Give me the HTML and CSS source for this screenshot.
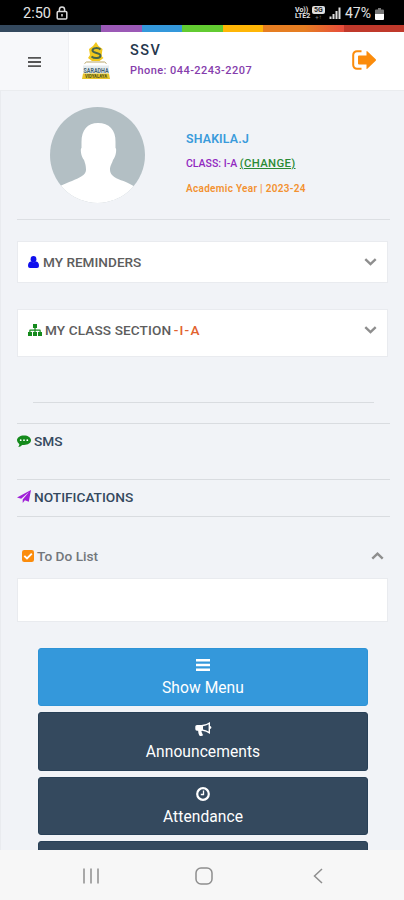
FILE: index.html
```
<!DOCTYPE html>
<html lang="en">
<head>
<meta charset="utf-8">
<meta name="viewport" content="width=device-width">
<title>SSV</title>
<link rel="stylesheet" href="styles.css">
</head>
<body>
<div class="status">
  <span class="time">2:50</span>
  <svg class="lock" width="12" height="14" viewBox="0 0 12 14" fill="none" stroke="#ddd" stroke-width="1.5"><rect x="1.2" y="5.5" width="9.6" height="7.5" rx="1"/><path d="M3.4 5.5V3.6a2.6 2.6 0 0 1 5.2 0v1.9M6 8v2.5"/></svg>
  <span class="volte"><span>Vo))</span><span>LTE2</span></span>
  <span class="net"><span class="net-5g">5G</span><span class="net-arrows">+↑</span></span>
  <svg class="signal" width="12" height="12" viewBox="0 0 12 12" fill="#ddd"><path d="M.5 9.500h2V12h-2zM3.500 7h2v5h-2zM6.500 4h2v8h-2zM9.500.5h2V12h-2z"/></svg>
  <span class="percent">47%</span>
  <svg class="battery" width="9" height="12" viewBox="0 0 9 12"><path fill="#777" d="M3 0h3v1.500h2a1 1 0 0 1 1 1V6H0V2.500a1 1 0 0 1 1-1h2z"/><path fill="#fff" d="M0 6h9v5a1 1 0 0 1-1 1H1a1 1 0 0 1-1-1z"/></svg>
</div>
<div class="stripe"></div>
<header class="header">
  <div class="menu-cell"><svg width="13" height="12" viewBox="0 0 13 12" fill="#555"><path d="M0 1h13v1.800H0zM0 5.100h13v1.800H0zM0 9.200h13V11H0z"/></svg></div>
  <svg class="logo" width="30" height="38" viewBox="0 0 30 38">
    <path fill="#f2c81d" d="M15 0l2.500 4 4 3-1 7 2 2-4 3H11l-4-3 2-3-1-6 4-3z"/>
    <path d="M19.500 7.500c-2-2-8-2-8 1s8 2 8 5-6 3.500-9 1" fill="none" stroke="#49664c" stroke-width="2"/>
    <path d="M3.500 21.500l2-1.500h18l2 1.500" fill="none" stroke="#b9a66a"/>
    <path fill="#e6ecee" d="M2 23.500h26v8H2z"/>
    <text x="2.500" y="30.700" textLength="25" lengthAdjust="spacingAndGlyphs" class="logo-name">SARADHA</text>
    <path fill="#e8c52b" d="M2 31.500h26l1 5.500H1z"/>
    <text x="4" y="36" textLength="22" lengthAdjust="spacingAndGlyphs" class="logo-sub">VIDYALAYA</text>
  </svg>
  <div class="school"><div class="school-name">SSV</div><div class="phone">Phone: 044-2243-2207</div></div>
  <svg class="logout" width="25" height="20" viewBox="0 0 25 20"><path d="M9.500 1.200H5A3.800 3.800 0 0 0 1.200 5v10A3.800 3.800 0 0 0 5 18.800h4.500" fill="none" stroke="#fb8c0c" stroke-width="2"/><path fill="#fb8c0c" d="M7 5.500h7.500V1.500q0-1 .8-.3l8.400 8q.8.800 0 1.600l-8.400 8q-.8.700-.8-.3V14.500H7q-1 0-1-1v-7q0-1 1-1z"/></svg>
</header>
<main class="page">
  <section class="profile">
    <svg class="avatar" width="95" height="96" viewBox="0 0 95 96"><defs><clipPath id="round"><ellipse cx="47.500" cy="48" rx="47.500" ry="48"/></clipPath></defs><g clip-path="url(#round)"><path fill="#b3bfc4" d="M0 0h95v96H0z"/><path fill="#fff" d="M48 16c11 0 18 7 17.500 19v6c1.500 0 .5 9-2.500 12-1 4-3 5-3 10 0 6 7 9 13.500 11 5 2 8 4 12 6L95 96H0L10 79c5-2 8-4 12-5 7-3 14-6 14-11 0-5-1-7-2-10-3-3-4-12-2.500-12v-6c0-12 6-19 16.500-19z"/></g></svg>
    <div class="details">
      <div class="student">SHAKILA.J</div>
      <div class="class-line">CLASS: I-A <a class="change">(CHANGE)</a></div>
      <div class="year">Academic Year | 2023-24</div>
    </div>
  </section>
  <section class="card reminders">
    <svg width="11" height="12" viewBox="0 0 11 12" fill="#1010ee"><ellipse cx="5.500" cy="3.200" rx="2.900" ry="3.200"/><path d="M2.600 5.500Q5.500 7 8.400 5.500 11 6 11 10q0 2-2 2H2q-2 0-2-2 0-4 2.600-4.500z"/></svg>
    <span class="card-title">MY REMINDERS</span>
    <svg class="chev" width="13" height="8" viewBox="0 0 13 8"><path d="M1.300 1.200l5.200 5 5.200-5"/></svg>
  </section>
  <section class="card class-section">
    <svg width="14" height="12" viewBox="0 0 14 12" fill="#148a1c"><path d="M5 0h4v4H7.600v1.500H12q.7 0 .7.700V8H14v4h-4V8h1.500V6.700H7.600V8H9v4H5V8h1.400V6.700H2.500V8H4v4H0V8h1.300V6.200q0-.7.700-.7h4.400V4H5z"/></svg>
    <span class="card-title">MY CLASS SECTION <b class="accent">-I-A</b></span>
    <svg class="chev" width="13" height="8" viewBox="0 0 13 8"><path d="M1.300 1.200l5.200 5 5.200-5"/></svg>
  </section>
  <hr class="short-rule">
  <section class="row sms">
    <svg width="14" height="12" viewBox="0 0 14 12"><path fill="#148a1c" d="M7 .5c4 0 7 2.100 7 4.800S11 10 7 10q-1 0-1.800-.1Q3.500 11.700 1.200 12q1-1 1.200-2.800Q0 7.700 0 5.300C0 2.600 3 .5 7 .5z"/><g fill="#fff"><circle cx="3.700" cy="5.200" r=".9"/><circle cx="7" cy="5.200" r=".9"/><circle cx="10.300" cy="5.200" r=".9"/></g></svg>
    <span>SMS</span>
  </section>
  <section class="row notes">
    <svg width="14" height="13" viewBox="0 0 14 13" fill="#a020d8"><path d="M14 0l-2.200 11.800-3.900-1.500L5.700 13V9.500L12 2 4.200 8.800 0 7.500z"/></svg>
    <span>NOTIFICATIONS</span>
  </section>
  <section class="todo">
    <svg width="12" height="12" viewBox="0 0 12 12"><rect width="12" height="12" rx="2.200" fill="#fb8c0c"/><path d="M2.300 5.800l2.700 2.700 4.800-4.800" fill="none" stroke="#fff" stroke-width="1.900"/></svg>
    <span>To Do List</span>
    <svg class="chev" width="13" height="8" viewBox="0 0 13 8"><path d="M1.300 6.700l5.200-5 5.200 5"/></svg>
  </section>
  <div class="todo-box"></div>
  <nav class="buttons">
    <a class="btn primary"><svg width="14" height="12" viewBox="0 0 14 12" fill="#fff"><path d="M0 0h14v2.500H0zM0 4.700h14v2.500H0zM0 9.400h14v2.500H0z"/></svg><span>Show Menu</span></a>
    <a class="btn"><svg width="17" height="14" viewBox="0 0 17 14"><path fill="#fff" d="M15 0v4q1.400.2 1.400 1.500T15 7v5Q11 9 7 8.800q-1.300 1 .3 2.200-.5 1 1 2-1.800 1.600-4 .4Q3 10.500 3.200 8.700H2Q.3 8.700.3 7V4.500Q.3 3 2 3h4.500Q11 3 15 0z"/><path fill="#34495e" d="M13.600 2.300v7.300Q11 8 8 7.600V4.200q3-.2 5.600-1.900z"/></svg><span>Announcements</span></a>
    <a class="btn"><svg width="14" height="14" viewBox="0 0 14 14" fill="none" stroke="#fff"><circle cx="7" cy="7" r="5.800" stroke-width="2.200"/><path d="M7.500 3.500v4H4.800" stroke-width="1.300"/></svg><span>Attendance</span></a>
    <a class="btn"></a>
  </nav>
</main>
<footer class="navbar">
  <svg width="16" height="16" viewBox="0 0 16 16"><path d="M1 .5v15M8 .5v15M15 .5v15"/></svg>
  <svg width="18" height="18" viewBox="0 0 18 18"><rect x="1" y="1" width="16" height="16" rx="5"/></svg>
  <svg width="10" height="16" viewBox="0 0 10 16"><path d="M9 1L1.500 8 9 15"/></svg>
</footer>
</body>
</html>
```
FILE: styles.css
```
* { box-sizing: border-box; }
body { margin: 0; width: 404px; height: 900px; overflow: hidden; display: flex; flex-direction: column; background: #f1f3f7; font-family: Roboto, "Liberation Sans", sans-serif; white-space: nowrap; }
svg { display: block; flex: none; }

.status { flex: none; height: 25px; background: #000; color: #e4e4e4; display: flex; align-items: center; padding: 1px 20px 0 23px; }
.time { font-size: 14.5px; width: 33px; }
.volte { margin-left: auto; display: flex; flex-direction: column; font-size: 7px; line-height: 6.5px; font-weight: 700; width: 16px; }
.net { display: flex; flex-direction: column; align-items: center; width: 13px; margin: 0 4px 0 1px; }
.net-5g { background: #ddd; color: #222; border-radius: 2px; font-size: 7px; line-height: 8px; font-weight: 700; width: 13px; text-align: center; }
.net-arrows { font-size: 6px; line-height: 6px; color: #888; }
.percent { font-size: 14px; margin: 0 2px 0 4px; width: 28px; }
.battery { margin-top: 2px; }

.stripe { flex: none; height: 7px; background: linear-gradient(90deg, #34495e 101px, #9b59b6 101px 142px, #3498db 142px 182px, #62cb31 182px 223px, #ffb606 223px 263px, #e67e22 263px 304px, #e74c3c 344px, #c0392b 344px); }

.header { flex: none; height: 59px; background: #fff; border-bottom: 1px solid #eaecef; display: flex; align-items: center; }
.menu-cell { width: 69px; height: 58px; background: #f7f8fa; border-right: 1px solid #eff0f3; display: flex; align-items: center; padding: 1px 0 0 28px; }
.logo { margin-left: 12px; overflow: visible; }
.logo-name { font: 700 8px Roboto, sans-serif; fill: #456474; }
.logo-sub { font: 700 4.500px/5px Roboto, sans-serif; fill: #4c5420; }
.school { margin-left: 19px; width: 222px; margin-top: -2px; }
.school-name { font-size: 14.500px; line-height: 18px; font-weight: 500; letter-spacing: 1.500px; color: #26374d; }
.phone { font-size: 11px; line-height: 14px; margin-top: 4px; letter-spacing: .44px; color: #863dac; font-weight: 500; }
.logout { margin-top: -2px; }

.page { height: 759px; overflow: hidden; padding: 16px 14px 0 16px; border-left: 1px solid #e9ebef; }
.profile { height: 113px; border-bottom: 1px solid #dcdfe3; display: flex; padding-left: 33px; }
.details { margin-left: 41px; padding-top: 23px; font-weight: 500; }
.student { color: #3a9bdb; font-size: 12.300px; line-height: 18px; letter-spacing: .2px; font-weight: 600; }
.class-line { color: #9128c0; font-size: 10.500px; line-height: 16px; margin-top: 8px; }
.change { color: #2b8b35; font-size: 11.300px; letter-spacing: .35px; text-decoration: underline; }
.year { color: #f39130; font-size: 10px; line-height: 14px; margin-top: 10px; letter-spacing: .3px; font-weight: 600; }

.card { width: 371px; background: #fff; border: 1px solid #e9ebef; display: flex; align-items: center; padding: 0 10px; color: #5d5d5d; }
.reminders { height: 42px; margin-top: 21px; padding-bottom: 1px; }
.class-section { height: 48px; margin-top: 26px; padding-bottom: 7px; }
.card-title { font-size: 13.600px; font-weight: 500; margin-left: 4px; }
.class-section .card-title { margin-left: 3px; letter-spacing: .12px; }
.accent { color: #e2622e; font-weight: 500; letter-spacing: 1.200px; margin-left: -1px; }
.chev { margin-left: auto; fill: none; stroke: #8e8e8e; stroke-width: 2.400; }

.short-rule { height: 1px; border: 0; background: #d9dce0; width: 341px; margin: 45px 0 20px 16px; }
.row { border-top: 1px solid #d9dce0; display: flex; align-items: center; gap: 3px; color: #34495e; font-size: 13.700px; font-weight: 500; }
.sms { height: 56px; padding-bottom: 21px; }
.notes { height: 38px; border-bottom: 1px solid #d9dce0; padding-bottom: 3px; }
.todo { height: 61px; display: flex; align-items: center; gap: 3px; padding: 17px 6px 0 5px; color: #73777c; font-size: 13.700px; font-weight: 500; }
.todo-box { width: 371px; height: 44px; background: #fff; border: 1px solid #e9ebef; }
.buttons { margin: 25.500px 0 0 21px; width: 330px; display: flex; flex-direction: column; gap: 6px; }
.btn { height: 58.500px; background: #34495e; border: 1px solid #284057; border-radius: 3px; color: #fff; font-size: 15.600px; display: flex; flex-direction: column; align-items: center; padding-top: 9px; }
.btn svg { height: 14px; }
.btn span { line-height: 18px; margin-top: 7px; letter-spacing: .05px; }
.primary { background: #3498db; border-color: #2e93d6; }

.navbar { flex: none; height: 50px; background: #f7f7f7; display: flex; align-items: center; padding: 2px 81px 0 83px; justify-content: space-between; }
.navbar svg { fill: none; stroke: #8e8e8e; stroke-width: 1.500; }
.navbar svg:nth-child(2) { margin-right: 4px; }
```
